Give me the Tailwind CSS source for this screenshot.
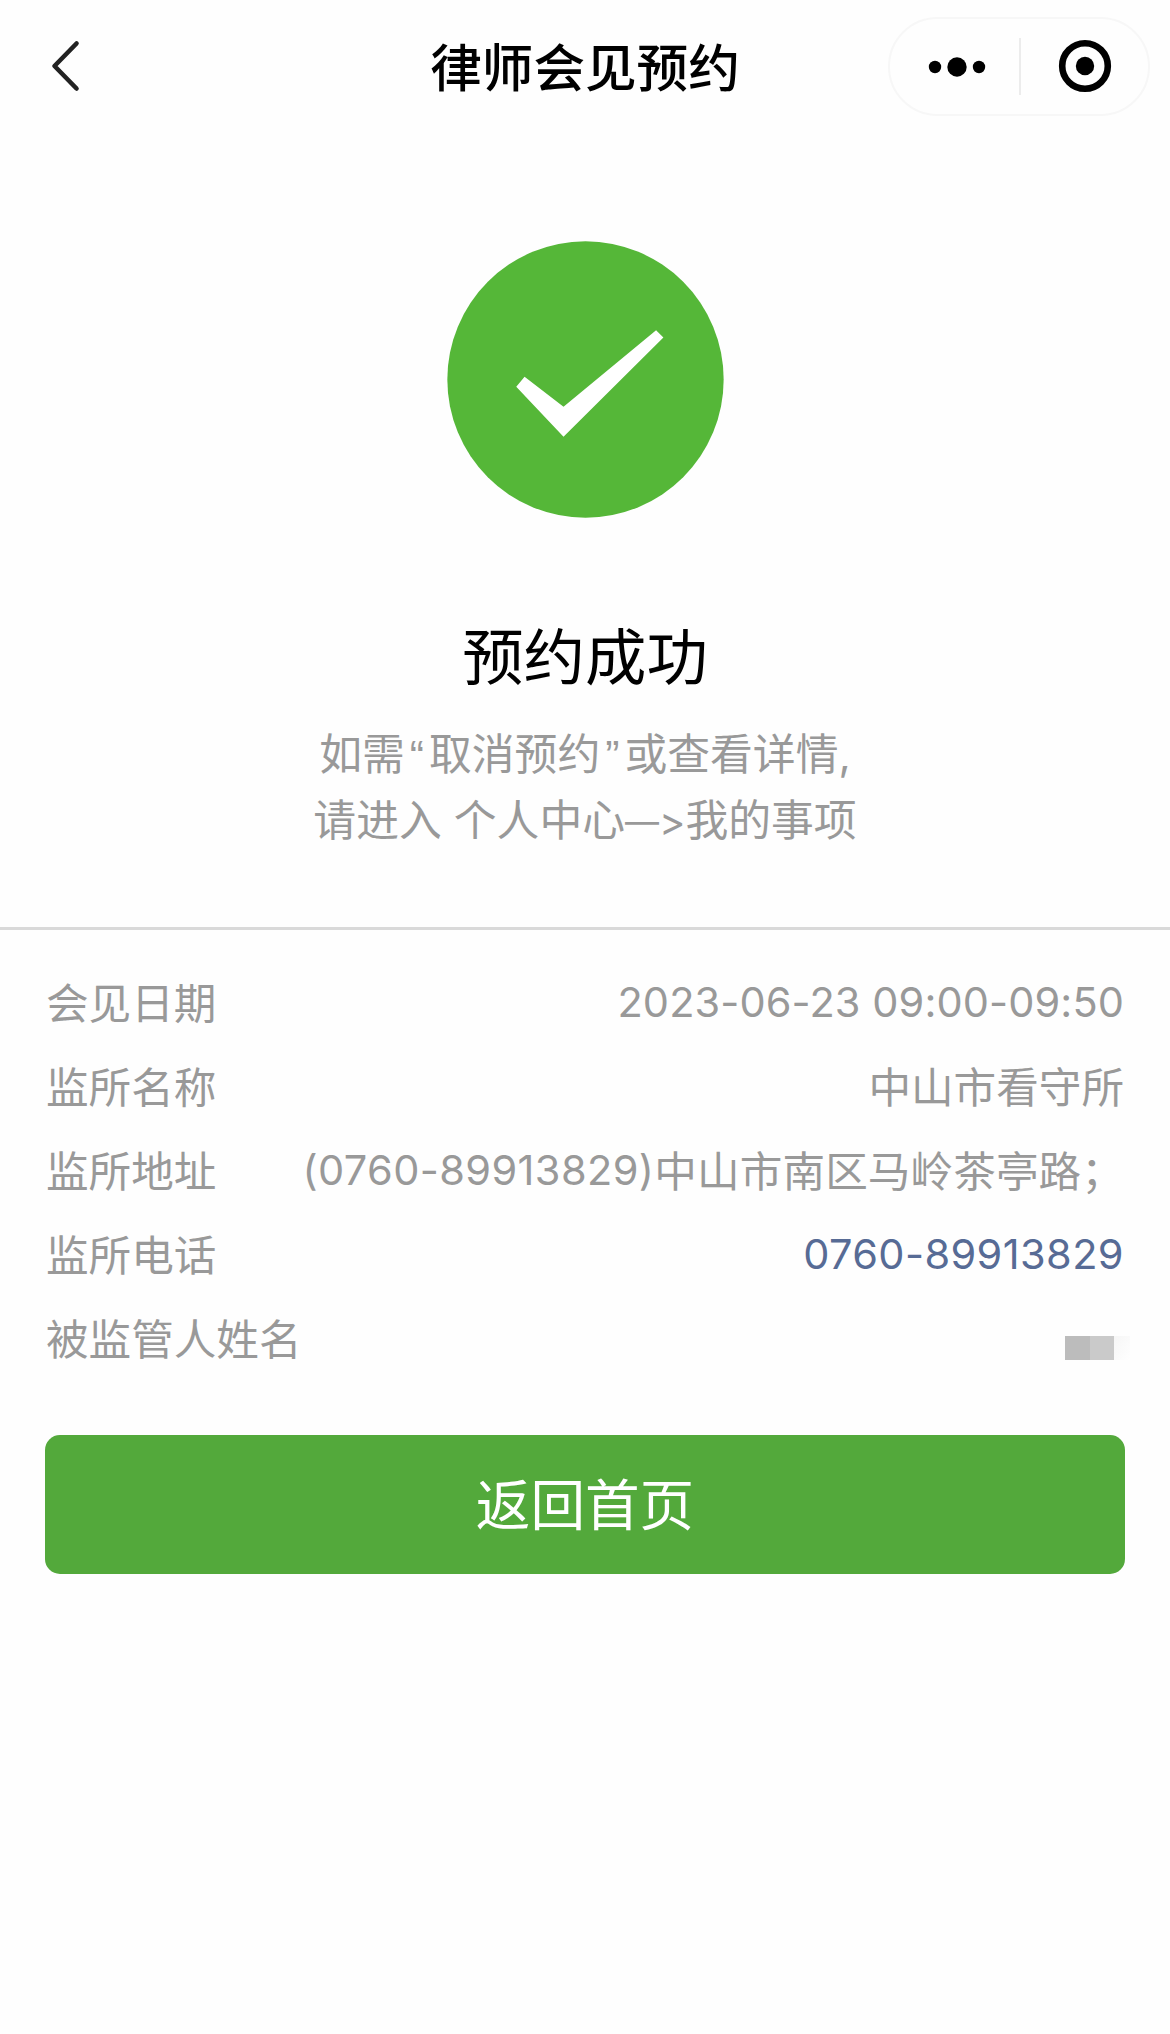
<!DOCTYPE html>
<html lang="zh-CN">
<head>
    <meta charset="UTF-8">
    <meta name="viewport" content="width=device-width, initial-scale=1.0">
    <title>律师会见预约</title>
    <script src="https://cdn.jsdelivr.net/npm/@tailwindcss/browser@4"></script>
</head>
<body class="bg-[#fefefe] min-h-screen font-['Inter','Noto_Sans_CJK_SC',sans-serif] text-[#999]">
    <!-- Navigation bar -->
    <header class="grid grid-cols-[minmax(0,1fr)_auto_minmax(0,1fr)] items-center h-[132px] px-5">
        <button type="button" aria-label="返回" class="justify-self-start pl-[30px]">
            <svg class="block w-8 h-14" viewBox="0 0 32 56" fill="none" stroke="#222" stroke-width="4.6" stroke-linecap="round" stroke-linejoin="round">
                <path d="M26.5 5.5 4.5 28l22 22.5"/>
            </svg>
        </button>
        <h1 class="pt-1 text-[51.6px] leading-[66px] font-medium text-black">律师会见预约</h1>
        <div class="justify-self-end flex items-center w-[262px] h-[99px] rounded-full border-2 border-[#f7f7f7]">
            <button type="button" aria-label="更多" class="flex justify-center w-[129px] pl-[5px] pt-px">
                <svg class="block w-[58px] h-5" viewBox="0 0 58 20">
                    <circle cx="7" cy="10" r="6.2"/>
                    <circle cx="29" cy="10" r="9.7"/>
                    <circle cx="51" cy="10" r="6.2"/>
                </svg>
            </button>
            <span class="w-[2px] h-[57px] bg-[#ececec]"></span>
            <button type="button" aria-label="关闭" class="flex justify-center flex-1">
                <svg class="block w-[54px] h-[54px]" viewBox="0 0 54 54">
                    <circle cx="27" cy="27" r="22.8" fill="none" stroke="#000" stroke-width="6.6"/>
                    <circle cx="27" cy="27" r="9.2"/>
                </svg>
            </button>
        </div>
    </header>

    <!-- Result -->
    <section class="flex flex-col items-center h-[798px] pt-[109px] border-b-[3px] border-[#d9d9d9]">
        <svg class="block w-[277px] h-[277px]" viewBox="50 62 832 832">
            <circle cx="466" cy="478" r="415" fill="#55b738"/>
            <path fill="#fff" d="M283 470 400 560 678 330 700 352 400 650 258 500Z"/>
        </svg>
        <h2 class="mt-[100px] text-[61.4px] leading-[80px] text-black">预约成功</h2>
        <p class="mt-6 text-[42.8px] leading-[66px] text-center">如需<span class="px-[5px] font-['Liberation_Sans']">“</span>取消预约<span class="px-[5px] font-['Liberation_Sans']">”</span>或查看详情,<br>请进入 个人中心<span class="text-[34px] leading-none align-[2px]">—</span><span class="text-[40px] leading-none">&gt;</span>我的事项</p>
    </section>

    <!-- Details -->
    <dl class="px-[46px] pt-8 text-[42.6px] leading-[84px]">
        <div class="flex justify-between h-[84px]">
            <dt>会见日期</dt>
            <dd class="text-[41.5px] leading-[80px] tracking-[0.1px]">2023-06-23 09:00-09:50</dd>
        </div>
        <div class="flex justify-between h-[84px]">
            <dt>监所名称</dt>
            <dd>中山市看守所</dd>
        </div>
        <div class="flex justify-between h-[84px]">
            <dt>监所地址</dt>
            <dd class="flex"><span class="text-[41.5px] leading-[80px] tracking-[0.4px] [font-feature-settings:'calt'_0]">(0760-89913829)</span><span class="tracking-[0.1px]">中山市南区马岭茶亭路；</span></dd>
        </div>
        <div class="flex justify-between h-[84px]">
            <dt>监所电话</dt>
            <dd class="text-[41.5px] leading-[80px] tracking-[0.4px] text-[#576b95]"><a href="tel:0760-89913829">0760-89913829</a></dd>
        </div>
        <div class="flex justify-between items-center h-[84px]">
            <dt>被监管人姓名</dt>
            <dd class="flex h-6 mt-4 -mr-[6px]">
                <span class="w-[25px] bg-[#bcbcbc]"></span>
                <span class="w-6 bg-[#cacaca]"></span>
                <span class="w-4 bg-linear-to-br from-[#f6f6f6] to-[#fefefe]"></span>
            </dd>
        </div>
    </dl>

    <div class="px-[45px] pt-[53px]">
        <button type="button" class="block w-full h-[139px] pt-[3px] rounded-[15px] bg-[#53a93b] text-[54.6px] text-white">返回首页</button>
    </div>
</body>
</html>
